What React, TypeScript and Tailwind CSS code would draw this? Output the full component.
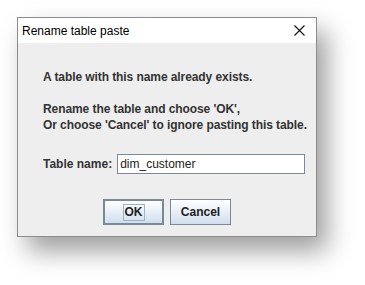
export default function App() {
  return (
    <div className="w-[365px] h-[285px] bg-white pt-[17px] pl-[17px]" style={{ fontFamily: '"Liberation Sans", Arial, sans-serif' }}>
      {/* Dialog window */}
      <div className="w-[300px] h-[220px] border border-[#8c8c8c] bg-[#eeeeee] flex flex-col shadow-[10px_14px_24px_rgba(0,0,0,0.38)]">
        {/* Title bar */}
        <div className="h-[25px] bg-white flex items-center justify-between pl-[4px] pr-[8px]">
          <span className="text-[12px] text-black">Rename table paste</span>
          <svg width="11" height="11" viewBox="0 0 11 11" className="mr-[3px]">
            <path d="M0.5 0.5 L10.5 10.5 M10.5 0.5 L0.5 10.5" stroke="#111" strokeWidth="1.1" fill="none" />
          </svg>
        </div>

        {/* Body */}
        <div className="flex-1 flex flex-col pt-[26px] pl-[25px] text-[12px] leading-[16px] text-[#333333] whitespace-nowrap">
          <p className="font-bold tracking-[-0.08px]">A table with this name already exists.</p>
          <p className="font-bold tracking-[-0.08px] mt-[16px]">Rename the table and choose 'OK',</p>
          <p className="font-bold tracking-[-0.08px]">Or choose 'Cancel' to ignore pasting this table.</p>

          <div className="flex items-center mt-[21px]">
            <span className="font-bold mr-[5px]">Table name:</span>
            <div className="w-[188px] h-[20px] border border-[#7a8a99] bg-white flex items-center pl-[2px] text-[12px] text-[#222]">
              dim_customer
            </div>
          </div>

          <div className="flex justify-center gap-[6px] mt-[25px] -ml-[25px]">
            <div className="w-[61px] h-[26px] border-2 border-[#7b8898] bg-gradient-to-b from-white to-[#cfdfef] flex items-center justify-center">
              <span className="font-bold text-[#222] border border-[#9fb3c8] px-[1px] leading-[15px]">OK</span>
            </div>
            <div className="w-[61px] h-[26px] border border-[#7b8898] bg-gradient-to-b from-white to-[#cfdfef] flex items-center justify-center">
              <span className="font-bold text-[#222]">Cancel</span>
            </div>
          </div>
        </div>
      </div>
    </div>
  )
}
